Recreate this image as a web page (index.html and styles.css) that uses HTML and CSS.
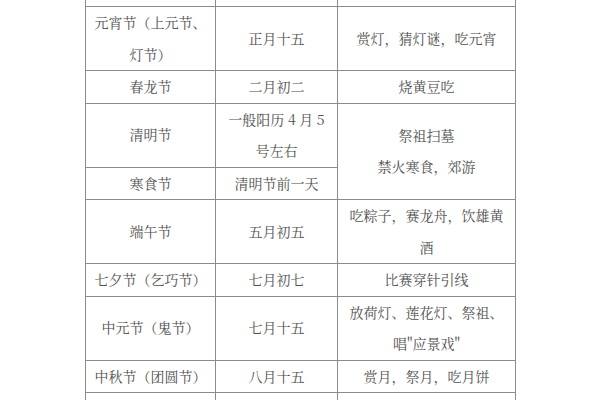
FILE: index.html
```html
<!DOCTYPE html>
<html lang="zh">
<head>
<meta charset="utf-8">
<link rel="stylesheet" href="styles.css">
</head>
<body>
<div class="page">
<table class="fest">
  <colgroup><col class="c1"><col class="c2"><col class="c3"></colgroup>
  <tr class="head-stub"><td></td><td></td><td></td></tr>
  <tr><td>元宵节（上元节、灯节）</td><td>正月十五</td><td>赏灯，猜灯谜，吃元宵</td></tr>
  <tr><td>春龙节</td><td>二月初二</td><td>烧黄豆吃</td></tr>
  <tr><td>清明节</td><td>一般阳历 4 月 5 号左右</td><td rowspan="2">祭祖扫墓<br>禁火寒食，郊游</td></tr>
  <tr><td>寒食节</td><td>清明节前一天</td></tr>
  <tr><td>端午节</td><td>五月初五</td><td>吃粽子，赛龙舟，饮雄黄酒</td></tr>
  <tr><td>七夕节（乞巧节）</td><td>七月初七</td><td>比赛穿针引线</td></tr>
  <tr><td>中元节（鬼节）</td><td>七月十五</td><td>放荷灯、莲花灯、祭祖、唱"应景戏"</td></tr>
  <tr><td>中秋节（团圆节）</td><td>八月十五</td><td>赏月，祭月，吃月饼</td></tr>
  <tr><td>重阳节</td><td>九月初九</td><td>登高，赏菊，插茱萸，喝菊花酒</td></tr>
</table>
</div>
</body>
</html>
```
FILE: styles.css
```css
html, body {
  margin: 0;
  padding: 0;
  background: #fff;
}
.page {
  width: 600px;
  height: 400px;
  overflow: hidden;
}
.fest {
  border-collapse: collapse;
  margin-top: -26px;
  margin-left: 85px;
  table-layout: fixed;
  width: 430px;
  font-family: "Noto Serif CJK SC", "Liberation Serif", "Noto Sans CJK SC", serif;
  font-size: 14px;
  color: #505050;
}
.c1 { width: 130px; }
.c2 { width: 122px; }
.c3 { width: 178px; }
.fest td {
  border: 1px solid #8c8c8c;
  padding: 0 8px;
  line-height: 31.5px;
  text-align: center;
  vertical-align: middle;
}
.head-stub td {
  height: 31px;
}
```
